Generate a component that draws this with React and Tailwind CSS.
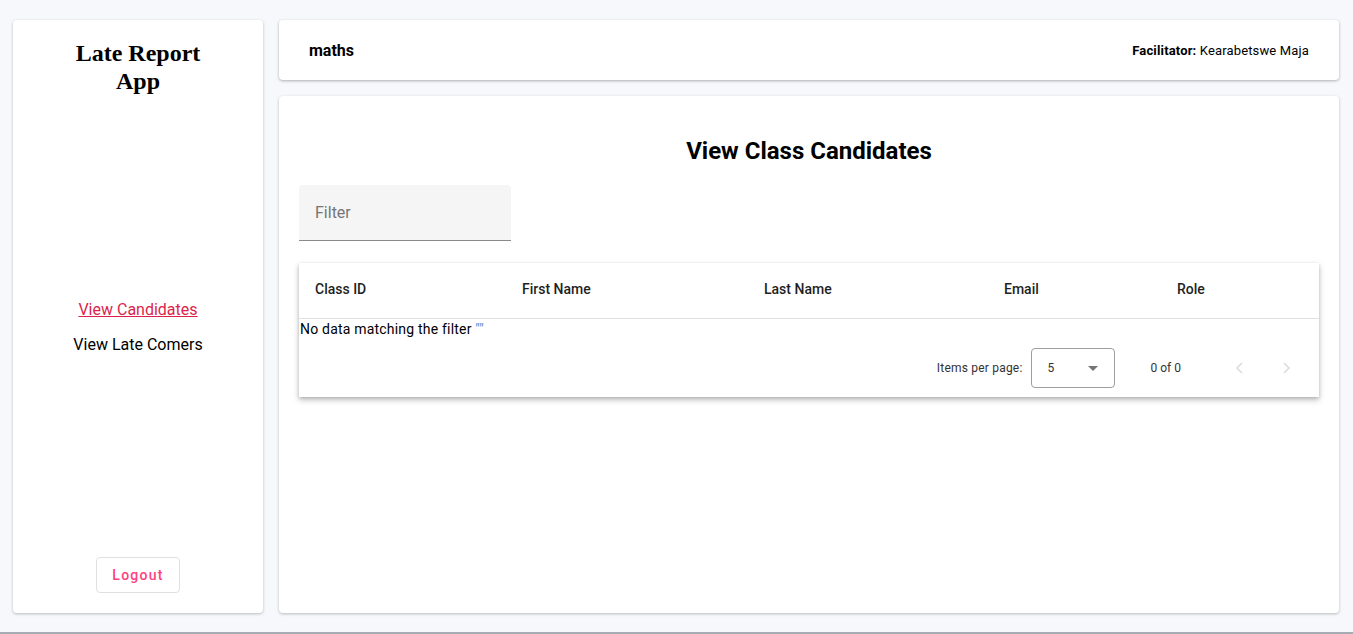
import React from 'react';

const columns = [
    { label: 'Class ID', width: 'w-[223px] pl-4' },
    { label: 'First Name', width: 'w-[242px]' },
    { label: 'Last Name', width: 'w-[240px]' },
    { label: 'Email', width: 'w-[173px]' },
    { label: 'Role', width: 'flex-1' },
];

const App = () => {
    return (
        <div className="h-[634px] bg-[#f7f8fc] border-b-2 border-[#a7abb3] font-['Roboto',sans-serif] text-black">
            <div className="flex gap-4 h-[632px] pl-[13px] pr-[14px] pt-5 pb-[19px]">
                {/* Sidebar */}
                <aside className="w-[250px] bg-white rounded shadow-[0_1px_3px_rgba(0,0,0,0.25)] flex flex-col items-center pt-[19px] pb-5">
                    <h1 className="font-['Liberation_Serif',serif] font-bold text-[24px] leading-[28px] text-center">
                        Late Report<br />App
                    </h1>
                    <nav className="flex-1 flex flex-col items-center justify-center gap-[13px] pt-0.5">
                        <a className="text-[#dc1f4b] underline text-[16px] leading-[22px]">View Candidates</a>
                        <a className="text-[16px] leading-[22px]">View Late Comers</a>
                    </nav>
                    <button className="w-[84px] h-9 rounded border border-[#e0e0e0] text-[#ff4081] text-[14px] font-medium tracking-[1.25px]">
                        Logout
                    </button>
                </aside>

                <div className="flex-1 flex flex-col gap-4">
                    {/* Header */}
                    <header className="h-[60px] bg-white rounded shadow-[0_1px_3px_rgba(0,0,0,0.3)] flex items-center justify-between pl-[30px] pr-[30px] pt-px">
                        <span className="font-bold text-[16px]">maths</span>
                        <span className="text-[13px] tracking-[0.15px]"><b>Facilitator:</b> Kearabetswe Maja</span>
                    </header>

                    {/* Main */}
                    <main className="flex-1 bg-white rounded shadow-[0_1px_3px_rgba(0,0,0,0.25)] px-5 pt-[39px]">
                        <h2 className="text-center font-bold text-[24px] leading-[32px]">View Class Candidates</h2>

                        <div className="mt-[18px] w-[212px] h-14 bg-[#f5f5f5] rounded-t border-b border-[#8a8a8a] flex items-center px-4">
                            <span className="text-[16px] text-[#757575] pt-px">Filter</span>
                        </div>

                        <div className="mt-[22px] bg-white shadow-[0_3px_6px_rgba(0,0,0,0.25),0_1px_3px_rgba(0,0,0,0.12)]">
                            <div className="flex items-center h-14 pb-0.5 border-b border-[#e0e0e0] text-[14px] font-medium text-[#1f1f1f]">
                                {columns.map((c) => (
                                    <div key={c.label} className={c.width}>{c.label}</div>
                                ))}
                            </div>
                            <div className="h-5 pl-px text-[14px] leading-5 tracking-[0.2px]">
                                No data matching the filter <span className="text-[#3f8fd8]">""</span>
                            </div>
                            <div className="h-[58px] flex items-center justify-end pr-[28px] text-[12px] text-[#333]">
                                <span className="tracking-[0.2px]">Items per page:</span>
                                <div className="ml-2 w-[84px] h-10 border border-[#9e9e9e] rounded flex items-center justify-between pl-4 pr-4">
                                    <span className="text-[12px]">5</span>
                                    <svg width="10" height="5" viewBox="0 0 10 5"><path d="M0 0l5 5 5-5z" fill="#757575" /></svg>
                                </div>
                                <span className="ml-9 mr-[54px]">0 of 0</span>
                                <div className="flex gap-[36px] text-[#dcdcdc]">
                                    <svg width="10" height="14" viewBox="0 0 10 14" fill="none" stroke="currentColor" strokeWidth="1.6"><path d="M7 2L2 7l5 5" /></svg>
                                    <svg width="10" height="14" viewBox="0 0 10 14" fill="none" stroke="currentColor" strokeWidth="1.6"><path d="M3 2l5 5-5 5" /></svg>
                                </div>
                            </div>
                        </div>
                    </main>
                </div>
            </div>
        </div>
    );
};

export default App;
